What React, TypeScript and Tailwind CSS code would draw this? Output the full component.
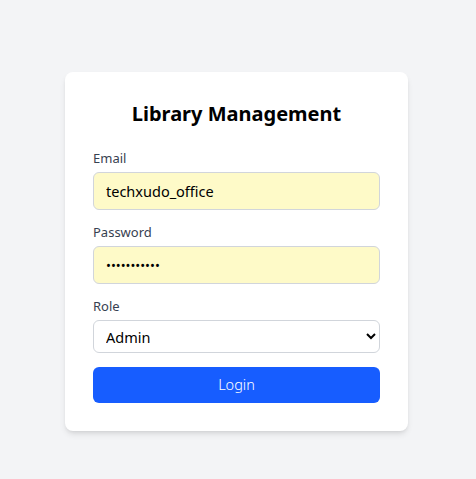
export default function App() {
  return (
    <div
      className="min-h-screen bg-[#f3f4f6] pt-[72px]"
      style={{ fontFamily: '"Noto Sans", "Open Sans", sans-serif' }}
    >
      <div className="ml-[65px] w-[343px] rounded-lg bg-white p-7 shadow-md">
        <h1 className="mb-5 text-center text-[20px] leading-7 font-bold text-black">Library Management</h1>

        <div className="mb-3">
          <label className="mb-1 block text-[13px] leading-5 text-[#374151]">Email</label>
          <input
            type="text"
            defaultValue="techxudo_office"
            className="h-[38px] w-full rounded-md border border-[#d1d5db] bg-[#fefac8] px-3 text-[14.5px] text-black outline-none"
          />
        </div>

        <div className="mb-3">
          <label className="mb-1 block text-[13px] leading-5 text-[#374151]">Password</label>
          <input
            type="password"
            defaultValue="password123"
            className="h-[38px] w-full rounded-md border border-[#d1d5db] bg-[#fefac8] px-3 text-[13px] text-black outline-none"
          />
        </div>

        <div className="mb-3.5">
          <label className="mb-1 block text-[13px] leading-5 text-[#374151]">Role</label>
          <select
            defaultValue="admin"
            className="h-[33px] w-full rounded-md border border-[#d1d5db] bg-white px-2 text-[14.5px] text-black outline-none"
          >
            <option value="admin">Admin</option>
            <option value="student">Student</option>
          </select>
        </div>

        <button className="h-9 w-full rounded-md bg-[#175dff] text-[14.5px] font-light text-white">Login</button>
      </div>
    </div>
  );
}
